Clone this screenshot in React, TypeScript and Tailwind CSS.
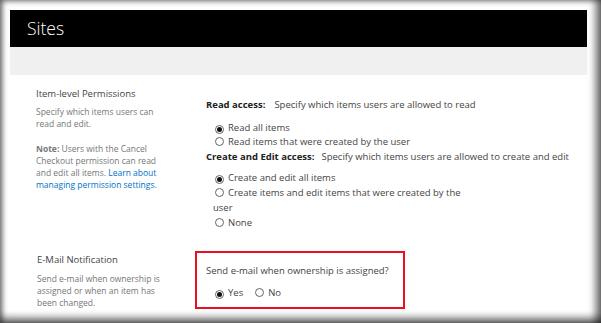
import React from "react";

const Radio = ({ checked }: { checked?: boolean }) => (
  <span className="inline-flex items-center justify-center w-[9px] h-[9px] rounded-full border border-[#666] bg-white ml-[2px] mr-[4px] align-[-1px]">
    {checked && <span className="block w-[5px] h-[5px] rounded-full bg-[#111]" />}
  </span>
);

export default function App() {
  return (
    <div
      className="relative w-[601px] h-[323px] overflow-hidden bg-white text-[#444] shadow-[inset_3px_0_5px_rgba(0,0,0,0.45),inset_-9px_0_7px_-3px_rgba(0,0,0,0.5),inset_0_-9px_7px_-3px_rgba(0,0,0,0.48),inset_0_4px_5px_-1px_rgba(0,0,0,0.15)]"
      style={{ fontFamily: '"Open Sans", "Noto Sans", sans-serif' }}
    >
      <div className="pl-[10px] pt-[10px] w-[587px]">
        <div className="h-[37px] bg-black flex items-center pl-[17px]">
          <span className="text-white text-[17.5px] font-light leading-none">Sites</span>
        </div>
        <div className="h-[28px] bg-[#f0f0f0]" />

        {/* Row 1 */}
        <div className="flex">
          <div className="w-[196px] pl-[26px] pt-[12px]">
            <div className="text-[9.5px] leading-[14px] text-[#444]">Item-level Permissions</div>
            <div className="mt-[5px] text-[8.5px] leading-[12px] text-[#777] w-[130px]">
              Specify which items users can
              <br />
              read and edit.
            </div>
            <div className="mt-[13px] text-[8.5px] leading-[12px] text-[#777]">
              <span className="font-bold">Note:</span> Users with the Cancel
              <br />
              Checkout permission can read
              <br />
              and edit all items. <span className="text-[#0072c6]">Learn about</span>
              <br />
              <span className="text-[#0072c6]">managing permission settings.</span>
            </div>
          </div>
          <div className="pt-[23px] text-[9.5px] text-[#444]">
            <div className="leading-[14px]">
              <span className="font-bold text-[#222]">Read access:</span>
              <span className="ml-[9px]">Specify which items users are allowed to read</span>
            </div>
            <div className="mt-[9px] pl-[7px] leading-[14px]">
              <div>
                <Radio checked />
                Read all items
              </div>
              <div>
                <Radio />
                Read items that were created by the user
              </div>
            </div>
            <div className="mt-[1px] leading-[14px]">
              <span className="font-bold text-[#222]">Create and Edit access:</span>
              <span className="ml-[7px]">Specify which items users are allowed to create and edit</span>
            </div>
            <div className="mt-[6px] pl-[7px] leading-[15px] w-[262px]">
              <div>
                <Radio checked />
                Create and edit all items
              </div>
              <div>
                <Radio />
                Create items and edit items that were created by the user
              </div>
              <div>
                <Radio />
                None
              </div>
            </div>
          </div>
        </div>

        {/* Row 2 */}
        <div className="flex mt-[21px]">
          <div className="w-[196px] pl-[27px] pt-[2px]">
            <div className="text-[9.5px] leading-[14px] text-[#444]">E-Mail Notification</div>
            <div className="mt-[6px] text-[8.5px] leading-[12px] text-[#777]">
              Send e-mail when ownership is
              <br />
              assigned or when an item has
              <br />
              been changed.
            </div>
          </div>
          <div className="-ml-[11px] w-[210px] border-2 border-[#e8101e] pl-[9px] pt-[11px] pb-[6px] text-[9.5px] text-[#444]">
            <div className="leading-[14px]">Send e-mail when ownership is assigned?</div>
            <div className="mt-[8px] leading-[14px] pl-[7px] flex">
              <span>
                <Radio checked />
                Yes
              </span>
              <span className="ml-[10px]">
                <Radio />
                No
              </span>
            </div>
          </div>
        </div>
      </div>
    </div>
  );
}
